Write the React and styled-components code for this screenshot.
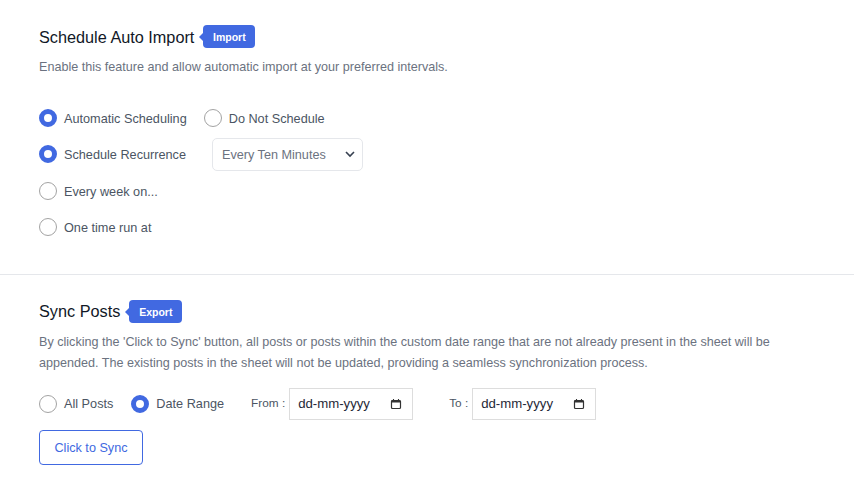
import React from 'react';
import styled, { createGlobalStyle } from 'styled-components';

const GlobalStyle = createGlobalStyle`
  html, body {
    margin: 0;
    padding: 0;
    background: #fff;
    font-family: "Liberation Sans", Arial, sans-serif;
  }
  * {
    box-sizing: border-box;
  }
`;

const Page = styled.div`
  width: 854px;
  height: 494px;
  overflow: hidden;
`;

const Section = styled.section`
  padding: ${(p) => p.$padding};
  border-bottom: ${(p) => (p.$divider ? '1px solid #e5e7eb' : 'none')};
`;

const TitleRow = styled.div`
  display: flex;
  align-items: flex-start;
  height: 24px;
`;

const Title = styled.h2`
  margin: ${(p) => p.$top || 0}px 0 0;
  font-size: 16.25px;
  font-weight: 400;
  line-height: 24px;
  color: #111827;
`;

const Badge = styled.span`
  position: relative;
  display: inline-flex;
  align-items: center;
  justify-content: center;
  height: 23px;
  width: ${(p) => p.$width}px;
  margin-left: ${(p) => p.$gap}px;
  border-radius: 4px;
  background: #4169e1;
  color: #fff;
  font-size: 10.5px;
  font-weight: 700;

  &::before {
    content: '';
    position: absolute;
    left: -4px;
    top: 8px;
    border-top: 4px solid transparent;
    border-bottom: 4px solid transparent;
    border-right: 4px solid #4169e1;
  }
`;

const Description = styled.p`
  margin: ${(p) => p.$top}px 0 0;
  max-width: 750px;
  font-size: 12.6px;
  line-height: 21px;
  color: #6b7280;
`;

const Options = styled.div`
  display: flex;
  flex-direction: column;
  margin-top: 22px;
`;

const Row = styled.div`
  display: flex;
  align-items: center;
  height: ${(p) => p.$height || 36}px;
`;

const Radio = styled.label`
  display: inline-flex;
  align-items: center;
  margin-right: ${(p) => p.$right || 0}px;
  font-size: 12.7px;
  line-height: 16px;
  color: #4b5563;
`;

const Text = styled.span`
  margin-top: ${(p) => p.$shift ?? 2}px;
`;

const Dot = styled.span`
  width: 18px;
  height: 18px;
  margin-right: 7px;
  flex: none;
  border-radius: 50%;
  background: #fff;
  border: ${(p) => (p.$checked ? '5px solid #4169e1' : '1px solid #a3a3a3')};
`;

const Select = styled.div`
  display: flex;
  align-items: center;
  justify-content: space-between;
  width: 151px;
  height: 33px;
  margin-left: 26px;
  padding: 0 6px 0 9px;
  border: 1px solid #e5e7eb;
  border-radius: 5px;
  font-size: 12.65px;
  line-height: 16px;
  color: #6b7280;
`;

const SyncRow = styled.div`
  display: flex;
  align-items: center;
  margin-top: 14px;
  height: 32px;
`;

const FieldLabel = styled.span`
  margin: -2px 4px 0 ${(p) => p.$left}px;
  font-size: 11.8px;
  color: #4b5563;
`;

const DateField = styled.div`
  display: flex;
  align-items: center;
  justify-content: space-between;
  width: 124px;
  height: 32px;
  padding: 0 10px 0 8px;
  border: 1px solid #ddd;
  font-size: 13.2px;
  color: #1f2937;
`;

const SyncButton = styled.button`
  display: block;
  width: 104px;
  height: 35px;
  margin-top: 10px;
  padding: 0;
  border: 1px solid #4169e1;
  border-radius: 4px;
  background: #fff;
  color: #4169e1;
  font-family: inherit;
  font-size: 12.65px;
`;

const CalendarIcon = () => (
  <svg width="12" height="12" viewBox="0 0 12 12" fill="none">
    <rect x="1.5" y="2.5" width="9" height="8" rx="1" stroke="#333" strokeWidth="1.2" />
    <rect x="1.5" y="2.5" width="9" height="2" fill="#333" />
    <path d="M3.5 1v1.5M8.5 1v1.5" stroke="#333" strokeWidth="1.1" />
  </svg>
);

const Chevron = () => (
  <svg width="12" height="8" viewBox="0 0 12 8" fill="none">
    <path d="M2 2l4 4 4-4" stroke="#374151" strokeWidth="1.6" />
  </svg>
);

export default function App() {
  return (
    <Page>
      <GlobalStyle />
      <Section $divider $padding="25px 39px 29px">
        <TitleRow>
          <Title>Schedule Auto Import</Title>
          <Badge $gap={9} $width={52}>Import</Badge>
        </TitleRow>
        <Description $top={8}>
          Enable this feature and allow automatic import at your preferred intervals.
        </Description>
        <Options>
          <Row>
            <Radio $right={17}><Dot $checked /><Text>Automatic Scheduling</Text></Radio>
            <Radio><Dot /><Text>Do Not Schedule</Text></Radio>
          </Row>
          <Row>
            <Radio><Dot $checked /><Text>Schedule Recurrence</Text></Radio>
            <Select><Text>Every Ten Minutes</Text><Chevron /></Select>
          </Row>
          <Row $height={37}>
            <Radio><Dot /><Text>Every week on...</Text></Radio>
          </Row>
          <Row>
            <Radio><Dot /><Text>One time run at</Text></Radio>
          </Row>
        </Options>
      </Section>
      <Section $padding="25px 39px 0">
        <TitleRow>
          <Title $top={-1}>Sync Posts</Title>
          <Badge $gap={9} $width={53}>Export</Badge>
        </TitleRow>
        <Description $top={8}>
          By clicking the 'Click to Sync' button, all posts or posts within the custom date range that are not already present in the sheet will be appended. The existing posts in the sheet will not be updated, providing a seamless synchronization process.
        </Description>
        <SyncRow>
          <Radio $right={18}><Dot />All Posts</Radio>
          <Radio><Dot $checked />Date Range</Radio>
          <FieldLabel $left={27}>From :</FieldLabel>
          <DateField><Text $shift={-2}>dd-mm-yyyy</Text><CalendarIcon /></DateField>
          <FieldLabel $left={36}>To :</FieldLabel>
          <DateField><Text $shift={-2}>dd-mm-yyyy</Text><CalendarIcon /></DateField>
        </SyncRow>
        <SyncButton>Click to Sync</SyncButton>
      </Section>
    </Page>
  );
}
